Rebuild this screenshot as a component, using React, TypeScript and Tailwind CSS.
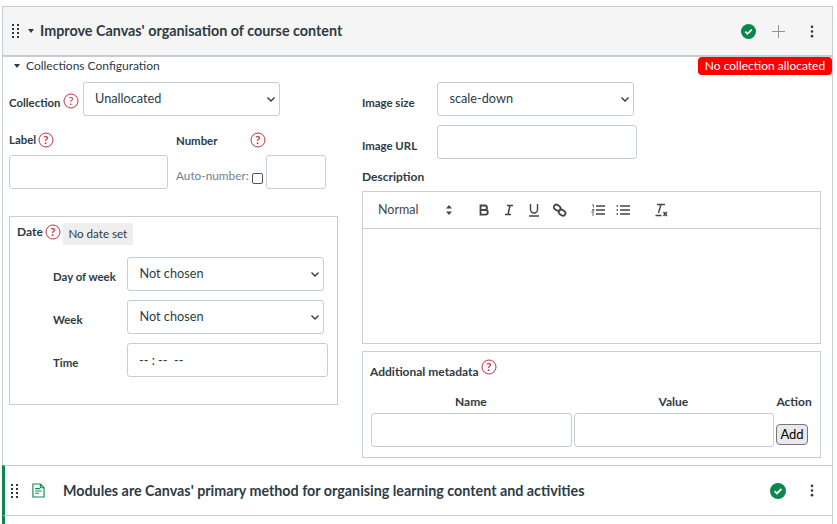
import React from 'react';

const fieldClass = 'h-[34px] rounded-[3px] border border-[#c7cdd1] bg-white text-[12.700px] text-[#2d3b45]';
const labelClass = 'text-[11.400px] font-bold';

const Help: React.FC<{ className?: string }> = ({ className = '' }) => (
  <svg viewBox="0 0 16 16" className={`h-4 w-4 shrink-0 ${className}`} fill="none">
    <circle cx="8" cy="8" r="7" stroke="#c4314b" strokeWidth="1" />
    <text x="8" y="12" textAnchor="middle" fontSize="11.500" fill="#c4314b" fontFamily="Lato, sans-serif">?</text>
  </svg>
);

const Grip: React.FC = () => (
  <svg viewBox="0 0 7 14" className="h-[14px] w-[7px] shrink-0" fill="#2d3b45">
    {[0, 4, 8, 12].map((y) =>
      [0, 5].map((x) => <rect key={`${x}-${y}`} x={x} y={y} width="2" height="2" />)
    )}
  </svg>
);

const Caret: React.FC = () => (
  <svg viewBox="0 0 8 6" className="h-[6px] w-2 shrink-0" fill="#2d3b45">
    <path d="M1 1h6L4 5z" />
  </svg>
);

const Check: React.FC<{ size: string }> = ({ size }) => (
  <svg viewBox="0 0 16 16" className={size}>
    <circle cx="8" cy="8" r="8" fill="#0b874b" />
    <path d="M4.600 8.200l2.300 2.200 4.500-4.400" fill="none" stroke="#fff" strokeWidth="1.800" />
  </svg>
);

const Kebab: React.FC = () => (
  <svg viewBox="0 0 4 14" className="h-[13px] w-1" fill="#2d3b45">
    <circle cx="2" cy="2" r="1.400" />
    <circle cx="2" cy="7" r="1.400" />
    <circle cx="2" cy="12" r="1.400" />
  </svg>
);

const Select: React.FC<{ value: string; className?: string }> = ({ value, className = '' }) => (
  <div className={`relative w-[197px] ${className}`}>
    <select className={`${fieldClass} w-full appearance-none pl-[11.500px]`} defaultValue={value}>
      <option>{value}</option>
    </select>
    <svg viewBox="0 0 8 5" className="pointer-events-none absolute right-[5px] top-[15px] h-[5px] w-2" fill="none" stroke="#2d3b45" strokeWidth="1.400">
      <path d="M0.500 0.500L4 4l3.500-3.500" />
    </svg>
  </div>
);

const Toolbar: React.FC = () => (
  <div className="flex h-[37px] items-center border-b border-[#ccc] text-[#444]">
    <span className="ml-[15px] w-[67px] text-[12.500px]">Normal</span>
    <svg viewBox="0 0 8 12" className="h-3 w-2"><path d="M4 1l3 3.500H1zM4 11L1 7.500h6z" fill="#444" /></svg>
    <svg viewBox="0 0 12 12" className="ml-[25px] h-3 w-3" fill="none" stroke="#444" strokeWidth="1.800">
      <path d="M2.500 1.500h4.200a2.200 2.200 0 010 4.500H2.500zM2.500 6h5a2.300 2.300 0 010 4.600h-5zM2.500 1v10" />
    </svg>
    <svg viewBox="0 0 12 12" className="ml-[13px] h-3 w-3" fill="none" stroke="#444" strokeWidth="1.500">
      <path d="M4 1.500h6M2 10.500h6M7 1.500l-2 9" />
    </svg>
    <svg viewBox="0 0 12 14" className="ml-[13px] h-[14px] w-3" fill="none" stroke="#444" strokeWidth="1.400">
      <path d="M2.500 1v5.500a3.500 3.500 0 007 0V1M1 13h10" />
    </svg>
    <svg viewBox="0 0 14 14" className="ml-[13px] h-[14px] w-[14px]" fill="none" stroke="#444" strokeWidth="1.800">
      <rect x="1" y="2" width="7" height="5" rx="2.500" transform="rotate(35 4 4)" />
      <rect x="6" y="7" width="7" height="5" rx="2.500" transform="rotate(35 9 9)" />
    </svg>
    <svg viewBox="0 0 14 12" className="ml-[24px] h-3 w-[14px]" fill="none" stroke="#444" strokeWidth="1.400">
      <path d="M5 2h9M5 6h9M5 10h9" />
      <path d="M1 1h1.500v2.500M1 5.500h2v1.500H1v1.500M1 9h2M1 11h2" strokeWidth="0.800" />
    </svg>
    <svg viewBox="0 0 14 12" className="ml-[11px] h-3 w-[14px]" fill="none" stroke="#444" strokeWidth="1.400">
      <path d="M4 2h10M4 6h10M4 10h10M0.500 2h1.500M0.500 6h1.500M0.500 10h1.500" />
    </svg>
    <svg viewBox="0 0 14 14" className="ml-[24px] h-[14px] w-[14px]" fill="none" stroke="#444" strokeWidth="1.400">
      <path d="M3 1.500h8M7 1.500L4.500 10M1.500 12.500h6" />
      <path d="M9.500 9l3.500 4M13 9l-3.500 4" strokeWidth="1.600" />
    </svg>
  </div>
);

const DateRow: React.FC<{ label: string; children: React.ReactNode }> = ({ label, children }) => (
  <div className="flex">
    <span className={`w-[74px] pt-[11px] ${labelClass}`}>{label}</span>
    {children}
  </div>
);

const CollectionsConfig: React.FC = () => (
  <div className="flex gap-6 pl-[6px] pr-[10px]">
    <div className="w-[329px]">
      <div className="flex h-[34px]">
        <span className={`mt-[12px] ${labelClass}`}>Collection</span>
        <Help className="ml-[2px] mt-[11px]" />
        <Select value="Unallocated" className="ml-[4px]" />
      </div>
      <div className={`mt-[13px] flex h-[22px] items-center ${labelClass}`}>
        <span className="flex w-[167px] items-center">Label<Help className="ml-[2px]" /></span>
        <span className="w-[74px] pt-[1px]">Number</span>
        <Help />
      </div>
      <div className="mt-[4px] flex">
        <input className={`${fieldClass} w-[159px]`} />
        <span className="ml-2 mt-[12px] w-[76px] text-[11.800px] text-[#73818c]">Auto-number:</span>
        <input type="checkbox" className="mt-[18px] h-[11px] w-[11px] appearance-none rounded-[2px] border border-[#555]" />
        <input className={`${fieldClass} ml-[3px] w-[60px]`} />
      </div>
      <div className="mt-[27px] h-[189px] border border-[#c7cdd1] pl-[7px] pr-[9px] pt-[6px]">
        <div className="flex items-center text-[12px] font-bold">
          <span className="mb-[4px]">Date</span>
          <Help className="mb-[4px] ml-[2px]" />
          <span className="ml-[2px] flex h-[22px] w-[70px] items-center justify-center bg-[#eeeeee] text-[11.600px] font-normal">No date set</span>
        </div>
        <div className="ml-[36px] mt-[12px] flex flex-col gap-[9px]">
          <DateRow label="Day of week">
            <Select value="Not chosen" />
          </DateRow>
          <DateRow label="Week">
            <Select value="Not chosen" />
          </DateRow>
          <DateRow label="Time">
            <div className={`${fieldClass} w-[201px] pl-[11px] pt-[7px] text-[9px] whitespace-pre`}>-- : --  --</div>
          </DateRow>
        </div>
      </div>
    </div>
    <div className="w-[459px]">
      <div className="flex h-[34px]">
        <span className={`mt-[12px] w-[75px] ${labelClass}`}>Image size</span>
        <Select value="scale-down" />
      </div>
      <div className="mt-[9px] flex h-[34px]">
        <span className={`mt-[12px] w-[75px] ${labelClass}`}>Image URL</span>
        <input className={`${fieldClass} w-[200px]`} />
      </div>
      <div className="mt-[10px] h-4 text-[12px] font-bold leading-4">Description</div>
      <div className="mt-[6px] border border-[#ccc]">
        <Toolbar />
        <div className="h-[114px]" />
      </div>
      <div className="mt-[7px] h-[107px] border border-[#c7cdd1] px-[7px] pt-[6px]">
        <div className="flex items-start text-[12px] font-bold">
          <span className="mt-[5px]">Additional metadata</span>
          <Help className="ml-[2px] mt-[1px]" />
        </div>
        <div className="mt-[12px] flex text-[12px] font-bold">
          <span className="w-[202px] text-center">Name</span>
          <span className="w-[204px] text-center">Value</span>
          <span className="w-[38px] text-center">Action</span>
        </div>
        <div className="mt-[2px] flex">
          <input className={`${fieldClass} ml-[1px] w-[201px]`} />
          <input className={`${fieldClass} ml-[2px] w-[200px]`} />
          <button className="ml-[2px] mt-[11px] h-[21px] w-[32px] rounded-[4px] border border-[#767676] bg-[#e9e9ed] text-[13px] text-black">Add</button>
        </div>
      </div>
    </div>
  </div>
);

export default function App() {
  return (
    <div className="h-[524px] w-[837px] overflow-hidden bg-white pl-[2px] pr-[4px] pt-[6px] font-['Lato',sans-serif] text-[#2d3b45]">
      <div className="h-[518px] border-x border-t border-[#c7cdd1]">
        <div className="flex h-[50px] items-center border-b-2 border-[#c7cdd1] bg-[#f5f5f5] pl-[9px] pr-[18px]">
          <Grip />
          <span className="ml-[8px]"><Caret /></span>
          <h2 className="ml-[5px] flex-1 text-[14.350px] font-bold">Improve Canvas' organisation of course content</h2>
          <Check size="h-[15px] w-[15px]" />
          <svg viewBox="0 0 13 13" className="ml-[16px] h-[13px] w-[13px]" stroke="#8b969e" strokeWidth="1">
            <path d="M6.500 0v13M0 6.500h13" />
          </svg>
          <span className="ml-[25px] flex"><Kebab /></span>
        </div>
        <div className="relative flex h-[20px] items-center pb-[2px] pl-[10px] text-[12px]">
          <Caret />
          <span className="ml-[5px]">Collections Configuration</span>
          <span className="absolute right-0 top-0 flex h-[18px] w-[134px] items-center justify-center rounded-[4px] bg-[#ff0000] text-[12px] text-white">No collection allocated</span>
        </div>
        <div className="mt-[5px]">
          <CollectionsConfig />
        </div>
        <div className="-ml-px mt-[7px] flex h-[51px] items-center border-y border-[#c7cdd1] border-l-[3px] border-l-[#0b874b] pl-[6px] pr-[18px]">
          <Grip />
          <svg viewBox="0 0 14 16" className="ml-[14px] h-[15px] w-[13px]" fill="none" stroke="#0b874b" strokeWidth="1.200">
            <path d="M1 1h8l4 4v10H1zM9 1v4h4" />
            <path d="M3.500 6h5M3.500 8.500h7M3.500 11h4" />
          </svg>
          <span className="ml-[18px] flex-1 text-[14.300px] font-bold">Modules are Canvas' primary method for organising learning content and activities</span>
          <Check size="h-4 w-4" />
          <span className="ml-[24px] flex"><Kebab /></span>
        </div>
        <div className="-ml-px h-[9px] border-l-[3px] border-l-[#0b874b]" />
      </div>
    </div>
  );
}
